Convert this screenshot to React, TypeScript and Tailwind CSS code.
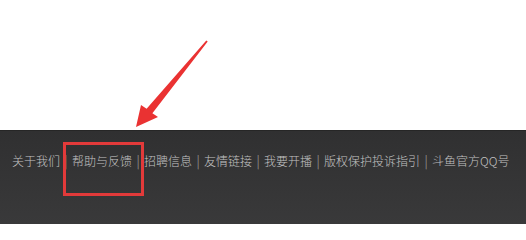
const links = [
  "关于我们",
  "帮助与反馈",
  "招聘信息",
  "友情链接",
  "我要开播",
  "版权保护投诉指引",
  "斗鱼官方QQ号",
];

export default function App() {
  return (
    <div className="relative w-[526px] h-[224px] overflow-hidden bg-white font-['Noto_Sans_CJK_SC','Noto_Sans',sans-serif]">
      <div className="h-[130px] bg-white" />

      <footer className="h-[94px] border-t border-[#262626] bg-gradient-to-b from-[#303031] to-[#39393a] pl-[12px] pt-[20px]">
        <div className="flex items-center text-[12px] leading-[20px] font-light text-[#c2c2c2]">
          {links.map((l, i) => (
            <span key={l} className="flex items-center">
              {i > 0 && <span className="w-[12px] text-center text-[13px] text-[#a8a8a8]">|</span>}
              <span>{l}</span>
            </span>
          ))}
        </div>
      </footer>

      {/* annotation: red box round the link */}
      <div className="absolute left-[63px] top-[142px] w-[81px] h-[54px] border-[3px] border-[#e23a3a]" />

      {/* annotation: arrow */}
      <svg className="absolute left-0 top-0" width="526" height="224" viewBox="0 0 526 224">
        <polygon
          points="206.3,40.5 207.7,41.5 152.4,113.3 158,117 136,127 141,105 146.6,108.7"
          fill="#ea3232"
        />
      </svg>
    </div>
  );
}
